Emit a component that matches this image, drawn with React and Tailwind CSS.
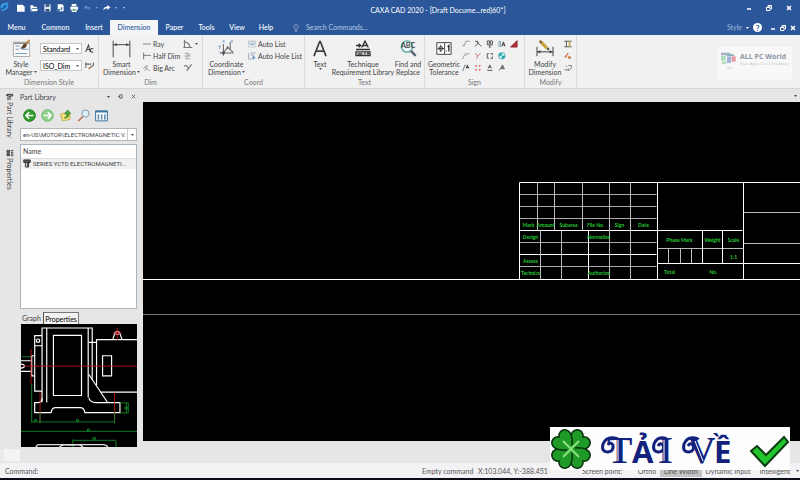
import React, { useState } from 'react';
import { Lightbulb } from 'lucide-react';

const TABS = [
    { name: 'Menu', width: 'w-[33px]' },
    { name: 'Common', width: 'w-[45px]' },
    { name: 'Insert', width: 'w-[32px]' },
    { name: 'Dimension', width: 'w-[48px]' },
    { name: 'Paper', width: 'w-[33px]' },
    { name: 'Tools', width: 'w-[31px]' },
    { name: 'View', width: 'w-[30px]' },
    { name: 'Help', width: 'w-[28px]' },
];

function Icon({ box, className, children, stroke = '#555', sw = 3 }) {
    return (
        <svg viewBox={box} className={className} fill="none" stroke={stroke} strokeWidth={sw} aria-hidden="true">
            {children}
        </svg>
    );
}

function Caret({ className = 'text-gray-600' }) {
    return (
        <svg viewBox="0 0 6 4" className={`inline-block h-[2px] w-[3px] shrink-0 ${className}`} aria-hidden="true">
            <path d="M0 0h6L3 4z" fill="currentColor" />
        </svg>
    );
}

function WindowButtons({ className }) {
    return (
        <div className={`flex items-center text-white ${className}`}>
            <button type="button" aria-label="Minimize" className="flex justify-center">
                <Icon box="0 0 12 12" className="size-[6px]" stroke="#fff"><path d="M2 8h8" /></Icon>
            </button>
            <button type="button" aria-label="Restore" className="flex justify-center">
                <Icon box="0 0 12 12" className="size-[6px]" stroke="#fff" sw={2}><path d="M1 5h7v6H1zM1 5h7M4 4V1h7v7H9M4 2h7" /></Icon>
            </button>
            <button type="button" aria-label="Close" className="flex justify-center">
                <Icon box="0 0 12 12" className="size-[6px]" stroke="#fff"><path d="M2 2l8 8M10 2l-8 8" /></Icon>
            </button>
        </div>
    );
}

function TitleBar() {
    return (
        <div className="flex h-5 items-center justify-between pr-2">
            <svg viewBox="0 0 390 45" className="h-[15px] w-[130px] self-start" fill="#fff" aria-hidden="true">
                <path d="M2 16q8-10 22-8 4 16-8 22Q4 34 2 30q10-2 14-10-8 0-14 6z" fill="#3aa0e8" />
                <path d="M8 18q8-6 14-4-2 10-12 14z" fill="#1b66b8" />
                <path d="M51 14h17l6 6v15H51z" />
                <path d="M91 16h8l3 4h9v5H96l-4 9zM97 27h18l-5 7H93z" />
                <path d="M133 13h19v21h-19z" fill="#dfe6f0" />
                <path d="M137 13h11v7h-11zM137 27h11v7h-11z" fill="#334d77" />
                <path d="M173 13h14l4 4v17h-18z" />
                <path d="M171 27h9v8h-9zM182 22h5v8h-5z" fill="#5579ad" />
                <path d="M215 12h14v7h-14zM211 20h23v9h-23zM215 30h15v6h-15z" />
                <path d="M218 27h9v6h-9z" fill="#63b97f" />
                <path d="M252 22l8-6v4q12-1 12 10-4-6-12-5v4z" fill="#6c8cc0" />
                <path d="M287 22h7l-3 4z" fill="#a9bcdb" />
                <path d="M331 22l-9-7v5q-12-1-12 11 4-6 12-6v5z" />
                <path d="M345 22h7l-3 4zM368 21h7l-3 5z" fill="#c9d6ea" />
            </svg>
            <h1 className="flex-1 text-center text-[7px] text-white">CAXA CAD 2020 - [Draft Docume...red)60*]</h1>
            <WindowButtons className="mb-1 gap-[14px]" />
        </div>
    );
}

function MenuTabs() {
    const [active, setActive] = useState('Dimension');
    return (
        <div className="flex h-[15px] items-stretch text-[7px] text-white">
            <nav className="flex">
                {TABS.map((t) => (
                    <button
                        key={t.name}
                        type="button"
                        onClick={() => setActive(t.name)}
                        className={`${t.width} font-medium ${active === t.name ? 'bg-[#f4f5f7] text-[#2b579a]' : 'text-white'}`}
                    >
                        {t.name}
                    </button>
                ))}
            </nav>
            <label className="ml-3 flex items-center gap-[6px] text-[#b8c8e2]">
                <Lightbulb className="size-2" aria-hidden="true" />
                <input
                    aria-label="Search Commands"
                    placeholder="Search Commands..."
                    className="w-20 bg-transparent placeholder-[#b8c8e2] outline-none"
                />
            </label>
            <div className="ml-auto flex items-center pr-1">
                <button type="button" className="mr-1 flex items-center gap-1 text-[#9fb5d8]">Style <Caret className="text-white" /></button>
                <button type="button" aria-label="Help" className="mr-2 flex size-[9px] items-center justify-center rounded-full bg-white text-[8px] font-bold text-[#2b579a]">?</button>
                <WindowButtons className="gap-1" />
            </div>
        </div>
    );
}

function Group({ title, className, children }) {
    return (
        <section className={`flex flex-col border-r border-[#dcdcdc] ${className}`}>
            <div className="flex flex-1 pt-[3px]">{children}</div>
            <h2 className="h-[10px] text-center text-[7px] leading-[9px] text-[#777]">{title}</h2>
        </section>
    );
}

function BigButton({ icon, lines, caret, caretBelow, className }) {
    return (
        <button type="button" className={`flex flex-col items-center whitespace-nowrap text-[7px] leading-2 text-[#444] ${className}`}>
            <span className="flex h-[21px] items-center">{icon}</span>
            <span className="mt-px">{lines[0]}</span>
            <span className="flex items-center gap-px">
                {lines[1]}
                {(caret || caretBelow) && <Caret />}
            </span>
        </button>
    );
}

function SmallButton({ icon, label }) {
    return (
        <button type="button" aria-label={label} className="flex h-3 items-center gap-[2px] whitespace-nowrap text-[7px] leading-2 text-[#444]">
            {icon}
            <span>{label}</span>
        </button>
    );
}

function Combo({ label, value }) {
    return (
        <div className="flex h-[11px] w-[42px] items-center border border-[#c6c6c6] bg-white pr-[2px]">
            <select aria-label={label} className="min-w-0 flex-1 appearance-none pl-[2px] text-[7px] leading-2 text-black outline-none">
                <option>{value}</option>
            </select>
            <Caret />
        </div>
    );
}

// small symbol icons, one row per line of the Sign group
const SIGNS = [
    ['Roughness', <path d="M2 14l4 6L12 4h12" stroke="#999" />],
    ['Datum', <path d="M3 4h8l4 8 8 8M3 20l8-8V4" />],
    ['Datum Target', <><path d="M4 3h16v12H4zM12 15v6M8 22h8" /><path d="M9 12l3-7 3 7" stroke="#333" /></>],
    ['Weld', <><path d="M3 4h5v16H3z" stroke="#7fa5b5" /><path d="M12 20l5-14 5 14M14 15h6" stroke="#333" /></>],
    ['Taper', <path d="M2 22L22 2v20z" fill="#b03038" stroke="#902028" />],
    ['Leader', <path d="M2 22L10 4M12 12l4-7h7" stroke="#999" />],
    ['Section', <path d="M3 4l9 8 8-8M12 12L8 21" stroke="#c56a6a" />],
    ['View Symbol', <path d="M9 5H4v14h5M14 5h6v5M20 14v6h-6" />],
    ['Center', <><circle cx="12" cy="12" r="10" fill="#2aa9ad" stroke="#2aa9ad" /><path d="M12 12V3a9 9 0 0 1 9 9zM12 12v9a9 9 0 0 1-9-9z" fill="#c9eeee" stroke="none" /></>],
    null,
    ['Leader Text', <><path d="M2 22L9 4h4" stroke="#777" /><path d="M13 14l4-10 4 10M14 11h6" stroke="#333" /></>],
    ['Hole Table', <path d="M4 6h5M15 6h5M4 18h5M15 18h5M6 3v6M18 3v6M6 15v6M18 15v6" stroke="#cf6b60" />],
    ['Label', <path d="M7 14l5-11 5 11M9 10h6M4 20h16" />],
    ['Text Arrow', <path d="M9 14l5-11 5 11M3 20l5-6 13 1M11 10h6" />],
];

function Ribbon() {
    return (
        <div className="flex h-[54px] shrink-0 border-b border-[#d5d5d5] bg-[#f1f1f2]">
            <Group title="Dimension Style" className="w-[99px]">
                <BigButton
                    className="ml-[2px] w-[38px]"
                    caret
                    lines={['Style', 'Manager']}
                    icon={
                        <Icon box="36 115 56 55" className="size-[19px]" stroke="#888" sw={2}>
                            <path d="M40 124h48v42H40z" fill="#fafafa" />
                            <path d="M42 127h44" stroke="#666" strokeWidth="3" />
                            <path d="M46 135h14M46 145h10M46 157h34M66 145h18" stroke="#6ba0c8" strokeWidth="3" />
                            <path d="M88 117L74 131" stroke="#c0823b" strokeWidth="5" />
                            <path d="M76 128q-8 0-10 8-3 6-8 6 14 3 19-3 4-5 2-9z" fill="#5d4632" stroke="none" />
                        </Icon>
                    }
                />
                <div className="flex flex-col gap-[6px] pt-[5px]">
                    <div className="flex items-center gap-[3px]">
                        <Combo label="Text style" value="Standard" />
                        <Icon box="0 0 26 26" className="size-[9px]" stroke="#444"><path d="M2 23L10 3l5 20M4 16h10M24 14q-8-3-8 4t8 5" /></Icon>
                    </div>
                    <div className="flex items-center gap-[3px]">
                        <Combo label="Dimension style" value="ISO_Dim" />
                        <Icon box="0 0 28 26" className="h-[9px] w-[10px]" stroke="#666"><path d="M2 4v16M2 9h16M24 4v8L10 23" /><path d="M18 16l-8 7" stroke="#b8895c" strokeWidth="4" /></Icon>
                    </div>
                </div>
            </Group>

            <Group title="Dim" className="w-[104px]">
                <BigButton
                    className="ml-[2px] w-[41px]"
                    caret
                    lines={['Smart', 'Dimension']}
                    icon={<Icon box="0 0 56 54" className="h-[18px] w-[19px]" stroke="#4a4a4a"><path d="M3 2v50M53 2v50M3 14h50" /><path d="M5 14l9-5v10zM51 14l-9-5v10z" fill="#4a4a4a" stroke="none" /></Icon>}
                />
                <div className="ml-px">
                    <SmallButton label="Ray" icon={<Icon box="0 0 24 24" className="size-2" stroke="#888"><path d="M0 12h24" /></Icon>} />
                    <SmallButton label="Half Dim" icon={<Icon box="0 0 24 24" className="size-2" stroke="#777"><path d="M2 2v20M2 10h22" /></Icon>} />
                    <SmallButton label="Big Arc" icon={<Icon box="0 0 24 24" className="size-2" stroke="#777" sw={2}><path d="M2 14Q6 4 16 5M6 21l4-12 4 8 6 3" /></Icon>} />
                </div>
                <div className="ml-auto mr-1 flex flex-col">
                    <button type="button" aria-label="Angle" className="flex h-3 items-center gap-[2px]">
                        <Icon box="0 0 28 28" className="size-[10px]" stroke="#777"><path d="M4 2v22h22M4 8q14 2 16 16M1 24h6" /></Icon>
                        <Caret />
                    </button>
                    <button type="button" aria-label="Chain" className="flex h-3 items-center">
                        <Icon box="0 0 28 28" className="size-[10px]" stroke="#999" sw={2}><path d="M4 6l16 3M4 14h18M6 22h16M12 3v20M20 9l-12 9" /></Icon>
                    </button>
                    <button type="button" aria-label="Arc" className="flex h-3 items-center">
                        <Icon box="0 0 28 28" className="size-[10px]" stroke="#777"><path d="M3 10q8-8 12 6l9-12M10 22l5-6" /></Icon>
                    </button>
                </div>
            </Group>

            <Group title="Coord" className="w-[102px]">
                <BigButton
                    className="ml-[3px] w-[41px]"
                    caret
                    lines={['Coordinate', 'Dimension']}
                    icon={
                        <Icon box="0 0 50 50" className="size-[17px]" stroke="#666">
                            <path d="M16 12v34M6 38h40M16 38l12-16 16 14M36 6v24" />
                            <path d="M14 1l5 6M19 1l-5 6M38 1l5 6M43 1l-5 6M2 16l3 5 3-5M5 21v5M3 34l5 6" stroke="#477fb5" strokeWidth="2" />
                            <path d="M26 18l7 4-7 4zM12 34h8v8h-8z" fill="#555" stroke="none" />
                        </Icon>
                    }
                />
                <div className="ml-px">
                    <SmallButton label="Auto List" icon={<Icon box="0 0 24 24" className="size-2" stroke="#8296aa" sw={2}><path d="M2 3h20v18H2zM2 10h20M9 3v7M16 3v7" strokeDasharray="3 2" /><path d="M6 14h12" stroke="#4f86bd" /></Icon>} />
                    <SmallButton label="Auto Hole List" icon={<Icon box="0 0 24 24" className="size-2" stroke="#7889a0" sw={2}><path d="M2 3v18h12M8 3h14M8 9h12" /><path d="M17 12v10M13 17h9" stroke="#4f86bd" strokeWidth="3" /></Icon>} />
                </div>
            </Group>

            <Group title="Text" className="w-[120px]">
                <BigButton
                    className="ml-px w-[28px]"
                    caretBelow
                    lines={['Text', '']}
                    icon={<Icon box="0 0 42 50" className="h-[17px] w-[14px]" stroke="#3c3c3c" sw={5}><path d="M3 48L20 4h2l17 44M9 33h24" /></Icon>}
                />
                <BigButton
                    className="w-[58px]"
                    lines={['Technique', 'Requirement Library']}
                    icon={
                        <Icon box="0 0 48 50" className="h-[17px] w-4" stroke="#333" sw={4}>
                            <path d="M20 22L30 3l10 19M24 16h12M3 16h14M11 11l6 5-6 5" />
                            <path d="M3 28h42M3 35h42v11H3zM8 41h14M28 40h4M36 40h6" />
                        </Icon>
                    }
                />
                <BigButton
                    className="ml-px w-[30px]"
                    lines={['Find and', 'Replace']}
                    icon={
                        <span className="relative flex">
                            <Icon box="0 0 54 50" className="h-[17px] w-[18px]" stroke="#5aa6a2" sw={4}>
                                <circle cx="24" cy="19" r="17" fill="#eef8f8" />
                                <path d="M36 32l14 15" stroke="#5b6470" strokeWidth="7" />
                            </Icon>
                            <span className="absolute inset-x-0 top-px text-center text-[7px] font-bold leading-[9px]">ABC</span>
                        </span>
                    }
                />
            </Group>

            <Group title="Sign" className="w-[100px]">
                <BigButton
                    className="ml-[2px] w-[34px]"
                    lines={['Geometric', 'Tolerance']}
                    icon={
                        <Icon box="0 0 48 40" className="h-[13px] w-4" stroke="#444">
                            <path d="M2 2h44v36H2zM26 2v36" fill="#fff" />
                            <circle cx="14" cy="20" r="6" />
                            <path d="M14 9v22M4 20h20" strokeWidth="3" />
                            <path d="M35 15l4-4v18M31 28h2" stroke="#222" strokeWidth="4" />
                        </Icon>
                    }
                />
                <div className="ml-px grid h-9 grid-cols-5 gap-x-1">
                    {SIGNS.map((s, i) =>
                        s ? (
                            <button key={s[0]} type="button" aria-label={s[0]} className="flex h-3 items-center">
                                <Icon box="0 0 25 25" className="size-2">{s[1]}</Icon>
                            </button>
                        ) : (
                            <span key={i} />
                        )
                    )}
                </div>
            </Group>

            <Group title="Modify" className="w-[52px]">
                <BigButton
                    className="ml-px w-[38px]"
                    lines={['Modify', 'Dimension']}
                    icon={
                        <Icon box="0 0 54 50" className="h-[17px] w-[18px]" stroke="#444">
                            <path d="M3 20v28M51 20v28M3 35h48" />
                            <path d="M4 35l9-5v10zM50 35l-9-5v10z" fill="#444" stroke="none" />
                            <path d="M15 6L33 24" stroke="#c9a13c" strokeWidth="9" />
                            <path d="M11 2l6 6" stroke="#8a6a35" strokeWidth="8" />
                            <path d="M31 27l7-6 2 9z" fill="#333" stroke="none" />
                        </Icon>
                    }
                />
                <div className="flex flex-col">
                    <button type="button" aria-label="Spacing" className="flex h-3 items-center"><Icon box="0 0 26 24" className="size-2" stroke="#555"><path d="M1 3h24M1 21h24M8 3v18" /><path d="M18 3v18" stroke="#c4a83e" strokeWidth="5" /></Icon></button>
                    <button type="button" aria-label="Match" className="flex h-3 items-center"><Icon box="0 0 26 24" className="size-2" stroke="#d2774a" sw={4}><path d="M14 3L4 14l6 2" /><circle cx="18" cy="17" r="3" /></Icon></button>
                    <button type="button" aria-label="Update" className="flex h-3 items-center"><Icon box="0 0 26 24" className="size-2" stroke="#777"><path d="M6 6h4M14 4h10v8l-8 8M2 18h12M14 14v8" /></Icon></button>
                </div>
            </Group>

            <div className="mb-2 ml-auto mr-2 mt-3 flex w-[74px] items-start gap-[3px] self-stretch bg-[#f8f8f8] pl-[3px] pt-[5px]">
                <Icon box="0 0 48 54" className="h-[18px] w-4" stroke="none">
                    <path d="M0 2h26v8H0z" fill="#a5b3c6" />
                    <path d="M0 12h14v14H0z" fill="#a9dcb8" />
                    <path d="M2 28h14v8H2z" fill="#bdd9c6" />
                    <path d="M16 6q18-4 26 6H18z" fill="#8fb2bd" />
                    <path d="M18 13h12v20H18z" fill="#a6b4dc" />
                    <path d="M32 13h12v16H32z" fill="#e79aa6" />
                    <path d="M18 44h14v8H18z" fill="#e9e7dc" />
                </Icon>
                <div className="whitespace-nowrap font-['Open_Sans',sans-serif]">
                    <p className="text-[7px] font-bold leading-[9px] text-[#8e95a6]">ALL PC World</p>
                    <p className="text-[4px] leading-[5px] text-[#c3c5ca]">Your Apps One Click Away</p>
                </div>
            </div>
        </div>
    );
}

function DockTabs() {
    return (
        <div className="flex w-[18px] shrink-0 flex-col items-end gap-2 pr-1 pt-1 text-[7px] leading-2 text-[#444]">
            <button type="button" className="flex h-[48px] flex-col items-center gap-px">
                <Icon box="0 0 24 24" className="size-2" stroke="#333"><path d="M4 4h16v5H4zM12 9v12M6 22V12M2 4v4" /></Icon>
                <span className="[writing-mode:vertical-rl]">Part Library</span>
            </button>
            <button type="button" className="flex flex-col items-center gap-px">
                <Icon box="0 0 24 24" className="size-2" stroke="#444"><path d="M3 4h8v6H3zM3 14h8v6H3z" fill="#567" /><path d="M15 5h7M15 10h7M15 15h7M15 20h7" /></Icon>
                <span className="[writing-mode:vertical-rl]">Properties</span>
            </button>
        </div>
    );
}

// front view of the motor housing with its green dimensions
function PartPreview() {
    return (
        <svg viewBox="63 57 347 368" preserveAspectRatio="xMidYMid slice" className="h-[123px] w-full shrink-0 border-l border-[#e6e6e7] bg-black" fill="none" stroke="#fff" strokeWidth="3.5">
            <path d="M126 291V69h150v43M140 70v222M264 70v207M160 91h84v180h-84z" />
            <path d="M126 92h-22v166h22M104 122h22" />
            <circle cx="114" cy="107" r="5" />
            <path d="M104 152h-9v60h9M63 167h32M63 199h32M63 177q10 0 10 6t-10 6" />
            <path d="M266 112h23M276 112v112M289 240V104h121M301 261h109M307 152h27v60h-27z" />
            <path d="M266 208l56 84M126 280q-2 12-12 12h-10v30h49q2-14 12-15h75q12 0 14 15h105v-30h-72q-18 0-21-14" />
            <path d="M338 103l6-20a8 8 0 0 1 14 0l7 20" />
            <circle cx="351" cy="84" r="5" stroke="#e88" />
            <g stroke="#c01818" strokeWidth="2.5">
                <path d="M68 183h342M93 132v106M120 262v90M343 262v80" />
                <path d="M351 68v38M338 84h27" />
            </g>
            <g stroke="#16912c" strokeWidth="2.5">
                <path d="M66 155h27M95 236v116M95 350h248M343 322v32M120 322v32M358 293h26v30h-26M378 293v30" />
                <path d="M63 378h347M218 425v-23M218 405h129v20" />
                <path d="M103 343h6v5h-6zM229 343h6v5h-6zM262 371h6v6h-6zM278 397h8v5h-8zM374 306h8v5h-8z" />
            </g>
            <path d="M108 425q2-7 10-7h190q12 0 14 7M178 425q10-8 24-6h20q20-2 26 6" stroke="#ddd" strokeWidth="4" />
        </svg>
    );
}

function PartLibrary() {
    return (
        <aside className="mb-[2px] ml-[2px] flex w-[117px] shrink-0 flex-col text-[7px] leading-2 text-[#444]">
            <header className="mt-px flex h-[13px] items-center gap-2 pr-px">
                <h2 className="flex-1">Part Library</h2>
                <button type="button" aria-label="Options" className="flex"><Caret className="text-[#444]" /></button>
                <button type="button" aria-label="Pin" className="flex"><Icon box="0 0 12 12" className="size-[5px]" sw={2}><path d="M0 6h4M4 2h6v8H4z" /></Icon></button>
                <button type="button" aria-label="Close panel" className="flex"><Icon box="0 0 12 12" className="size-[5px]" sw={2}><path d="M2 2l8 8M10 2l-8 8" /></Icon></button>
            </header>
            <div className="flex h-[25px] items-center gap-[5px] pl-[3px]">
                <button type="button" aria-label="Back">
                    <Icon box="0 0 40 40" className="size-[13px]" stroke="#fff" sw={5}><circle cx="20" cy="20" r="18" fill="#2f9e2c" stroke="#1e7d20" strokeWidth="3" /><path d="M32 20H11M19 10L9 20l10 10" /></Icon>
                </button>
                <button type="button" aria-label="Forward">
                    <Icon box="0 0 40 40" className="size-[13px]" stroke="#fff" sw={5}><circle cx="20" cy="20" r="18" fill="#8fd08a" stroke="#74bd72" strokeWidth="3" /><path d="M8 20h21M21 10l10 10-10 10" /></Icon>
                </button>
                <button type="button" aria-label="Up">
                    <Icon box="0 0 40 40" className="size-[13px]" stroke="#b39a3c" sw={2}><path d="M4 16l12-4 4 4h14v16L10 37z" fill="#f3dc7a" /><path d="M16 28q10-4 8-14h-7L27 3l9 11h-6q2 14-14 14z" fill="#45a83c" stroke="#2d7d2a" /></Icon>
                </button>
                <button type="button" aria-label="Find">
                    <Icon box="0 0 40 40" className="size-[13px]" stroke="#8395a8"><circle cx="26" cy="14" r="11" fill="#dceefa" /><path d="M18 23L4 37" stroke="#b9744b" strokeWidth="5" /></Icon>
                </button>
                <button type="button" aria-label="Views">
                    <Icon box="0 0 40 36" className="h-3 w-[13px]" stroke="#2d6d9c"><path d="M2 2h36v31H2z" fill="#fff" /><path d="M2 5h36" strokeWidth="4" /><path d="M8 15h5M18 15h5M28 15h5M8 21h5M18 21h5M28 21h5M8 27h5M18 27h5M28 27h5" strokeWidth="4" /></Icon>
                </button>
            </div>
            <div className="flex h-[13px] shrink-0 items-stretch border border-[#b5b5b5] bg-white">
                <select aria-label="Library path" className="min-w-0 flex-1 appearance-none overflow-hidden pl-[2px] font-['Roboto',sans-serif] text-[6px] leading-2 outline-none">
                    <option>en-US\MOTOR\ELECTROMAGNETIC V.</option>
                </select>
                <span className="flex w-[9px] items-center justify-center border-l border-[#c8c8c8]"><Caret /></span>
            </div>
            <div className="mt-[3px] min-h-0 flex-1 border border-[#a9b6c2] bg-white">
                <table className="w-full table-fixed text-left">
                    <thead>
                        <tr><th className="h-[13px] border-b border-[#e0e0e0] pl-[2px] font-normal">Name</th></tr>
                    </thead>
                    <tbody>
                        <tr>
                            <td className="h-[11px] bg-[#f1f1f1] pl-[2px]">
                                <span className="flex items-center gap-[2px]">
                                    <Icon box="0 0 24 28" className="h-[9px] w-2 shrink-0" stroke="#333"><path d="M2 3h20v8H2zM7 11h10v14H7z" fill="#555" /><path d="M10 12v12" stroke="#ddd" /></Icon>
                                    <span className="whitespace-nowrap font-['Roboto',sans-serif] text-[6px]">SERIES YCTD ELECTROMAGNETI...</span>
                                </span>
                            </td>
                        </tr>
                    </tbody>
                </table>
            </div>
            <div className="flex h-[15px] shrink-0 items-end">
                <button type="button" className="h-3 w-6 border-r border-[#555]">Graph</button>
                <button type="button" className="h-3 w-[35px] border-r border-t border-[#777] bg-[#f3f3f3] text-black">Properties</button>
            </div>
            <PartPreview />
        </aside>
    );
}

const LABELS = [
    ['Mark', 9, 44], ['Amount', 26, 44], ['Subarea', 49, 44], ['File No.', 76, 44], ['Sign', 100, 44], ['Date', 124, 44],
    ['Design', 11, 56], ['Normalize', 79, 56], ['Assess', 11, 80], ['Technics', 11, 92], ['Authorize', 79, 92],
    ['Phase Mark', 160, 59], ['Weight', 193, 59], ['Scale', 214, 59], ['1:1', 214, 76], ['Total', 150, 91], ['No.', 194, 91],
];

function DrawingArea() {
    return (
        <main className="mb-2 ml-[6px] flex min-w-0 flex-1 flex-col">
            <div className="flex h-[13px] shrink-0 items-center justify-end pr-[3px]">
                <button type="button" aria-label="Window list" className="flex"><Caret className="text-[#444]" /></button>
            </div>
            <div className="relative min-h-0 flex-1 bg-black">
                <svg className="absolute inset-0 size-full" fill="none" stroke="#e8e8e8" role="img" aria-label="Title block">
                    <line x1="0" y1="177.5" x2="100%" y2="177.5" stroke="#fff" />
                    <line x1="0" y1="212.5" x2="100%" y2="212.5" stroke="#777" />
                    <g transform="translate(376.5 80.5)">
                        <path d="M0 12h137M0 24h137M0 36h137M0 60h137M0 84h137" stroke="#aaa" />
                        <path d="M0 97V0h2000M0 48h223M0 72h137" stroke="#fff" />
                        <path d="M18 0v48M35 0v48M63 0v48M90 0v97M111 0v97M21 48v49M42 48v49" stroke="#bbb" />
                        <path d="M69 48v49M138 0v97M224 0v97" stroke="#fff" />
                        <path d="M138 66h86M149 66v15M161 66v15M172 66v15" stroke="#bbb" />
                        <path d="M183 48v33M203 48v33M138 81h2000" stroke="#fff" />
                        <path d="M224 30h2000M224 61h2000" stroke="#bbb" />
                        <g fill="#27c936" stroke="none" textAnchor="middle" className="font-['Lato',sans-serif] text-[5px] font-bold">
                            {LABELS.map(([text, x, y]) => (
                                <text key={text} x={x} y={y}>{text}</text>
                            ))}
                        </g>
                    </g>
                </svg>
            </div>
        </main>
    );
}

function StatusBar() {
    return (
        <footer className="flex h-[17px] shrink-0 items-center border-b-2 border-[#0b0d16] bg-[#f2f2f4] pl-[5px] pr-px pt-px text-[7px] leading-2 text-[#555]">
            <label htmlFor="command">Command:</label>
            <input id="command" className="min-w-0 flex-1 bg-transparent outline-none" />
            <span className="w-[56px]">Empty command</span>
            <span className="w-[104px]">X:103.044, Y:-388.451</span>
            <span className="w-[52px]">Screen point:</span>
            <button type="button" className="w-[26px]">Ortho</button>
            <button type="button" className="h-3 w-[42px] bg-[#c3c3c3]">Line Width</button>
            <button type="button" className="w-[52px]">Dynamic Input</button>
            <button type="button" className="w-[42px]">Intelligent</button>
            <Caret />
        </footer>
    );
}

function DownloadBadge() {
    const leaf = 'M20 22C11 15 7 9 10 4c3-4 8-3 10 0 2-3 7-4 10 0 3 5-1 11-10 18z';
    return (
        <a href="#download" aria-label="Tải về" className="absolute bottom-[10px] right-[10px] block bg-[#fdfdfd]">
            <svg viewBox="0 0 240 43" className="h-[43px] w-[240px]">
                <g transform="translate(1 1)" stroke="#06320c" strokeWidth="1.5" fill="#1f9a27">
                    <circle cx="20" cy="21" r="12" />
                    <path d={leaf} transform="rotate(45 20 21)" />
                    <path d={leaf} transform="rotate(135 20 21)" />
                    <path d={leaf} transform="rotate(225 20 21)" />
                    <path d={leaf} transform="rotate(315 20 21)" />
                    <circle cx="20" cy="21" r="4" stroke="none" />
                    <path d="M12 13l16 16M28 13L12 29" stroke="#8ce07e" strokeWidth="2" />
                </g>
                <g fill="#13227c" className="font-bold">
                    <g className="font-['Liberation_Serif',serif] text-[38px]">
                        <text x="57" y="36">T</text>
                        <text x="108" y="36">I</text>
                        <text x="138" y="36">V</text>
                    </g>
                    <g className="font-['Open_Sans',sans-serif] text-[31px]">
                        <text x="82" y="36">Ả</text>
                        <text x="164" y="36">Ề</text>
                    </g>
                </g>
                <g fill="none" stroke="#13227c" strokeWidth="3">
                    <path d="M68 12Q57 8 53 17q-2 8 5 8 6-1 5-7-3-4-5 0" />
                    <path d="M117 12q-9-4-13 5-2 8 5 8 6-1 4-7-3-3-5 1" />
                    <path d="M148 12q-10-4-14 5-2 8 5 8 6-1 4-7-3-3-5 1" />
                </g>
                <path d="M68 13v21M114 13v21M145 14l8 20" stroke="#fff" strokeWidth="1" />
                <path d="M201 24l6-5 9 9 18-18 4 5-23 24z" fill="#22c52c" stroke="#0a3b10" strokeWidth="2" />
            </svg>
        </a>
    );
}

function App() {
    return (
        <div className="relative flex h-screen min-h-[480px] flex-col overflow-hidden bg-[#e6e6e7] font-['Lato','Noto_Sans',sans-serif]">
            <header className="shrink-0 bg-[#2b579a]">
                <TitleBar />
                <MenuTabs />
            </header>
            <Ribbon />
            <div className="flex min-h-0 flex-1">
                <DockTabs />
                <PartLibrary />
                <DrawingArea />
            </div>
            <div className="h-[14px] shrink-0">
                <div className="h-3 w-5 border-l-4 border-[#eaeaea] bg-[#f3f3f3]" />
            </div>
            <StatusBar />
            <DownloadBadge />
        </div>
    );
}

export default App;
